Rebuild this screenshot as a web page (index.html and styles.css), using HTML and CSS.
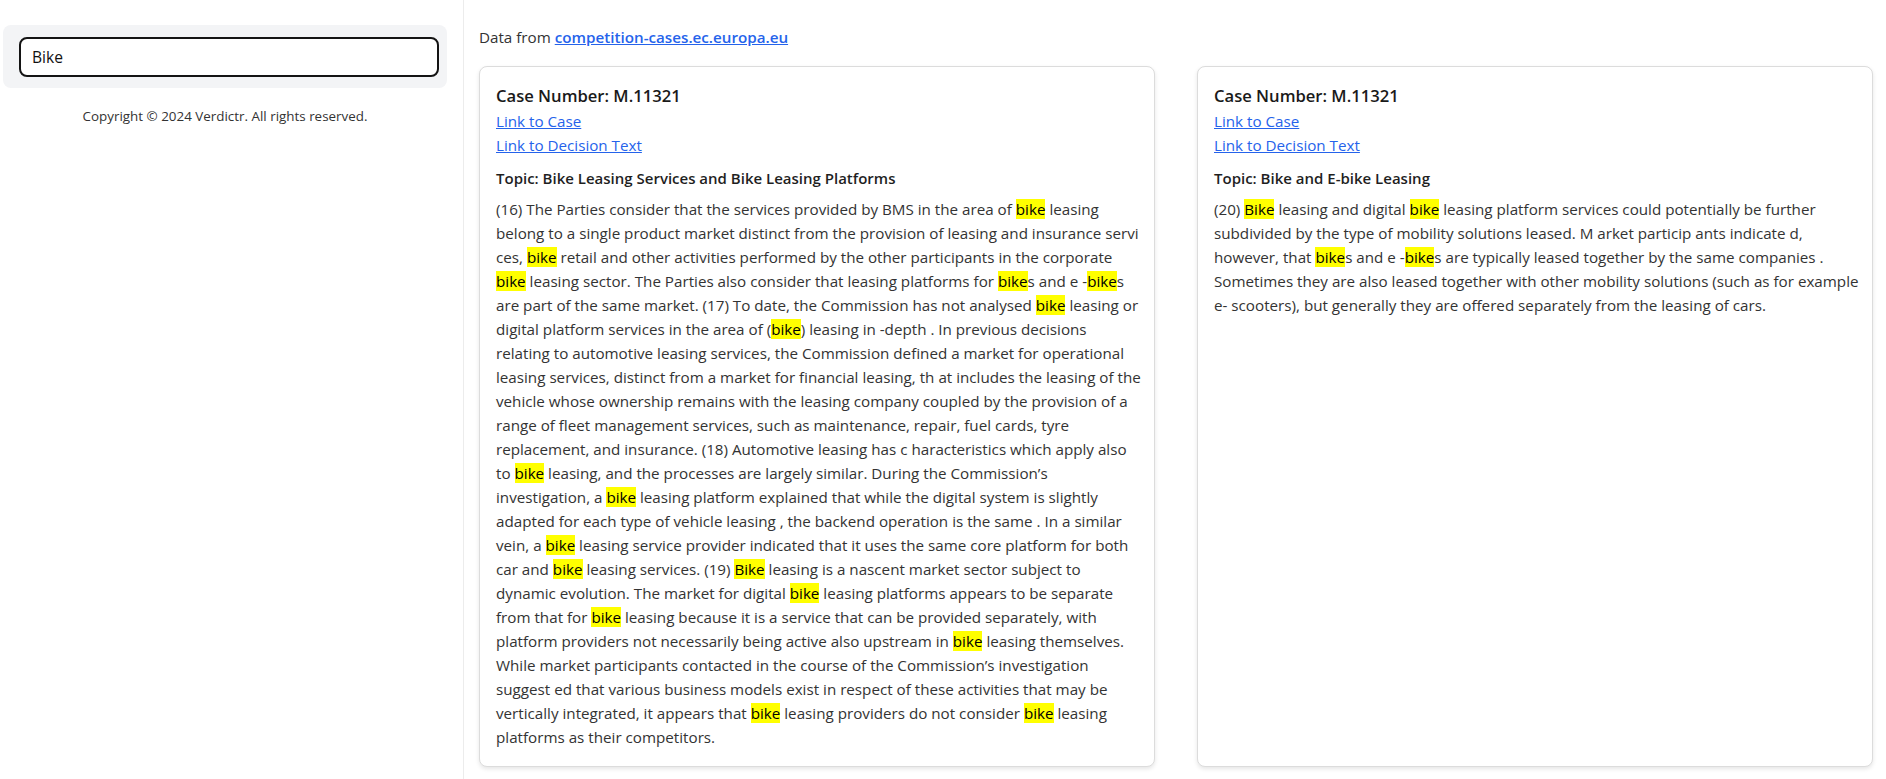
FILE: index.html
```html
<!DOCTYPE html>
<html lang="en">
<head>
<meta charset="utf-8">
<title>Verdictr</title>
<link rel="stylesheet" href="styles.css">
</head>
<body>
<div class="app">
  <aside class="sidebar">
    <div class="search-box">
      <input class="search-input" type="text" value="Bike">
    </div>
    <p class="copyright">Copyright © 2024 Verdictr. All rights reserved.</p>
  </aside>
  <main class="main">
    <p class="source">Data from <a class="source-link" href="#">competition-cases.ec.europa.eu</a></p>
    <div class="cards">
      <article class="card">
        <h2 class="card-title">Case Number: M.11321</h2>
        <a class="card-link" href="#">Link to Case</a>
        <a class="card-link" href="#">Link to Decision Text</a>
        <h3 class="card-topic">Topic: Bike Leasing Services and Bike Leasing Platforms</h3>
        <p class="card-text">(16) The Parties consider that the services provided by BMS in the area of <mark>bike</mark> leasing<br>
belong to a single product market distinct from the provision of leasing and insurance servi<br>
ces, <mark>bike</mark> retail and other activities performed by the other participants in the corporate<br>
<mark>bike</mark> leasing sector. The Parties also consider that leasing platforms for <mark>bike</mark>s and e -<mark>bike</mark>s<br>
are part of the same market. (17) To date, the Commission has not analysed <mark>bike</mark> leasing or<br>
digital platform services in the area of (<mark>bike</mark>) leasing in -depth . In previous decisions<br>
relating to automotive leasing services, the Commission defined a market for operational<br>
leasing services, distinct from a market for financial leasing, th at includes the leasing of the<br>
vehicle whose ownership remains with the leasing company coupled by the provision of a<br>
range of fleet management services, such as maintenance, repair, fuel cards, tyre<br>
replacement, and insurance. (18) Automotive leasing has c haracteristics which apply also<br>
to <mark>bike</mark> leasing, and the processes are largely similar. During the Commission’s<br>
investigation, a <mark>bike</mark> leasing platform explained that while the digital system is slightly<br>
adapted for each type of vehicle leasing , the backend operation is the same . In a similar<br>
vein, a <mark>bike</mark> leasing service provider indicated that it uses the same core platform for both<br>
car and <mark>bike</mark> leasing services. (19) <mark>Bike</mark> leasing is a nascent market sector subject to<br>
dynamic evolution. The market for digital <mark>bike</mark> leasing platforms appears to be separate<br>
from that for <mark>bike</mark> leasing because it is a service that can be provided separately, with<br>
platform providers not necessarily being active also upstream in <mark>bike</mark> leasing themselves.<br>
While market participants contacted in the course of the Commission’s investigation<br>
suggest ed that various business models exist in respect of these activities that may be<br>
vertically integrated, it appears that <mark>bike</mark> leasing providers do not consider <mark>bike</mark> leasing<br>
platforms as their competitors.</p>
      </article>
      <article class="card">
        <h2 class="card-title">Case Number: M.11321</h2>
        <a class="card-link" href="#">Link to Case</a>
        <a class="card-link" href="#">Link to Decision Text</a>
        <h3 class="card-topic">Topic: Bike and E-bike Leasing</h3>
        <p class="card-text">(20) <mark>Bike</mark> leasing and digital <mark>bike</mark> leasing platform services could potentially be further<br>
subdivided by the type of mobility solutions leased. M arket particip ants indicate d,<br>
however, that <mark>bike</mark>s and e -<mark>bike</mark>s are typically leased together by the same companies .<br>
Sometimes they are also leased together with other mobility solutions (such as for example<br>
e- scooters), but generally they are offered separately from the leasing of cars.</p>
      </article>
    </div>
  </main>
</div>
</body>
</html>
```

FILE: styles.css
```css
* { box-sizing: border-box; }

html, body {
  margin: 0;
  padding: 0;
  background: #ffffff;
}

body {
  font-family: "Open Sans", "Noto Sans", sans-serif;
  color: #333333;
  font-size: 15.2px;
  line-height: 24px;
}

.app {
  display: flex;
  min-height: 100vh;
}

.sidebar {
  flex: 0 0 464px;
  width: 464px;
  border-right: 1px solid #ececec;
  padding: 25px 16px 0 3px;
}

.search-box {
  background: #f3f4f6;
  border-radius: 8px;
  padding: 12px 8px 11px 16px;
}

.search-input {
  display: block;
  width: 420px;
  height: 40px;
  border: 2px solid #141414;
  border-radius: 8px;
  padding: 0 11px;
  font-family: inherit;
  font-size: 15.6px;
  color: #111111;
  background: #ffffff;
  outline: none;
}

.copyright {
  margin: 18px 0 0;
  text-align: center;
  font-size: 13.4px;
  line-height: 20px;
  color: #333333;
}

.main {
  flex: 1 1 auto;
  min-width: 0;
  padding: 25px 13px 0 15px;
}

.source {
  margin: 0 0 17px;
  line-height: 24px;
  color: #333333;
}

.source-link {
  color: #2563eb;
  font-weight: 600;
  text-decoration: underline;
}

.cards {
  display: grid;
  grid-template-columns: repeat(2, minmax(0, 1fr));
  column-gap: 42px;
  align-items: stretch;
}

.card {
  min-width: 0;
  border: 1px solid #dcdcdc;
  border-radius: 8px;
  padding: 16px 16px 17px;
  background: #ffffff;
  box-shadow: 0 2px 4px rgba(0, 0, 0, 0.10);
}

.card-title {
  margin: 0;
  font-size: 16.6px;
  line-height: 26px;
  font-weight: 600;
  color: #1a1a1a;
}

.card-link {
  display: block;
  width: max-content;
  color: #2563eb;
  text-decoration: underline;
  line-height: 24px;
}

.card-topic {
  margin: 9px 0 7px;
  font-size: 15px;
  line-height: 24px;
  font-weight: 600;
  color: #1f1f1f;
}

.card-text {
  margin: 0;
  line-height: 24px;
  color: #333333;
  white-space: nowrap;
}

mark {
  background: #ffff00;
  color: #000000;
}
```
